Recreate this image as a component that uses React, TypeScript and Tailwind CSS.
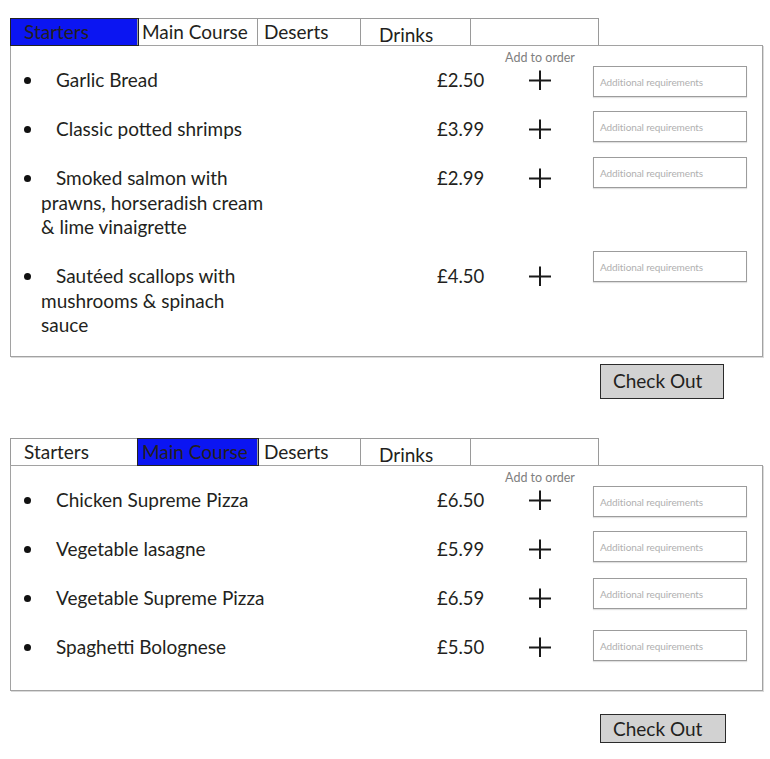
import React from 'react';

// Menu ordering wireframe — two copies of the tabbed menu panel,
// one with Starters active and one with Main Course active.

interface MenuItem {
  lines: string[];
  price: string;
  inputShift: string;
}

interface Tab {
  label: string;
  cls: string;
}

const TABS: Tab[] = [
  { label: 'Starters', cls: 'w-[127px] pl-[13px]' },
  { label: 'Main Course', cls: 'w-[120px] pl-[4px]' },
  { label: 'Deserts', cls: 'w-[103px] pl-[6px]' },
  { label: 'Drinks', cls: 'w-[110px] pl-[18px] pt-[3px]' },
  { label: '', cls: 'flex-1' },
];

const STARTERS: MenuItem[] = [
  { lines: ['Garlic Bread'], price: '£2.50', inputShift: '-mt-[2px]' },
  { lines: ['Classic potted shrimps'], price: '£3.99', inputShift: '-mt-[6px]' },
  {
    lines: ['Smoked salmon with', 'prawns, horseradish cream', '& lime vinaigrette'],
    price: '£2.99',
    inputShift: '-mt-[9px]',
  },
  {
    lines: ['Sautéed scallops with', 'mushrooms & spinach', 'sauce'],
    price: '£4.50',
    inputShift: '-mt-[13px]',
  },
];

const MAINS: MenuItem[] = [
  { lines: ['Chicken Supreme Pizza'], price: '£6.50', inputShift: '-mt-[2px]' },
  { lines: ['Vegetable lasagne'], price: '£5.99', inputShift: '-mt-[6px]' },
  { lines: ['Vegetable Supreme Pizza'], price: '£6.59', inputShift: '-mt-[8px]' },
  { lines: ['Spaghetti Bolognese'], price: '£5.50', inputShift: '-mt-[5px]' },
];

function Plus() {
  return (
    <svg width="24" height="24" viewBox="0 0 24 24" className="block">
      <path d="M1 12.5H23M12 2.5V22" stroke="#1a1a1a" strokeWidth="2" fill="none" />
    </svg>
  );
}

function Row({ item }: { item: MenuItem }) {
  return (
    <div className="flex items-start">
      <div className="w-[30px] shrink-0">
        <div className="ml-[13px] mt-[9px] w-[7px] h-[7px] rounded-full bg-[#111]" />
      </div>
      <div className="w-[396px] shrink-0 leading-[24.5px]">
        {item.lines.map((line, i) => (
          <div key={i} className={i === 0 ? 'pl-[15px] whitespace-nowrap' : 'whitespace-nowrap'}>
            {line}
          </div>
        ))}
      </div>
      <div className="w-[91px] shrink-0 leading-[24.5px] text-[18.5px]">{item.price}</div>
      <div className="w-[24px] h-[24px] shrink-0">
        <Plus />
      </div>
      {/* input hangs over the row line; its own height must not push the row */}
      <div className="ml-[41px] w-[154px] h-[24px] shrink-0">
        <div className={`w-[154px] h-[31px] border border-[#9c9c9c] shadow-[0_1px_1px_#e0e0e0] flex items-center pl-[6px] ${item.inputShift}`}>
          <span className="text-[10px] text-[#b0b0b0] leading-none tracking-[-0.1px]">Additional requirements</span>
        </div>
      </div>
    </div>
  );
}

function MenuPanel({ active, items, boxH }: { active: string; items: MenuItem[]; boxH: string }) {
  return (
    <div>
      <div className="flex w-[589px] h-[27px] border-t border-l border-r border-[#9a9a9a]">
        {TABS.map((t, i) => {
          const on = t.label === active;
          return (
            <div
              key={i}
              className={`${t.cls} h-[26px] leading-[26px] text-[19px] ${i < TABS.length - 1 ? 'border-r border-[#9a9a9a]' : ''} ${
                on ? 'relative z-10 bg-[#0b15f2] outline-1 outline-[#222]' : ''
              }`}
            >
              {t.label}
            </div>
          );
        })}
      </div>
      <div className={`w-[753px] ${boxH} border border-[#a2a2a2] shadow-[1px_1px_0_#dadada] pt-[5px] text-[19px]`}>
        <div className="pl-[489px] h-[14px]">
          <div className="w-[80px] text-center text-[12.5px] leading-[14px] text-[#808080]">Add to order</div>
        </div>
        <div className="mt-[3px] flex flex-col gap-[24.5px]">
          {items.map((it, i) => (
            <Row key={i} item={it} />
          ))}
        </div>
      </div>
    </div>
  );
}

function CheckOut({ size }: { size: string }) {
  return (
    <div className="pl-[590px]">
      <button className={`${size} bg-[#d2d2d2] border-[1.5px] border-[#2b2b2b] text-left pl-[12px] text-[19px] text-[#231f20]`}>
        Check Out
      </button>
    </div>
  );
}

export default function App() {
  return (
    <div
      className="w-[770px] h-[759px] bg-white pt-[18px] pl-[10px] text-[#231f20]"
      style={{ fontFamily: 'Lato, "Open Sans", sans-serif' }}
    >
      <MenuPanel active="Starters" items={STARTERS} boxH="h-[312px]" />
      <div className="mt-[7px]">
        <CheckOut size="w-[124px] h-[35px]" />
      </div>
      <div className="mt-[39px]">
        <MenuPanel active="Main Course" items={MAINS} boxH="h-[226px]" />
      </div>
      <div className="mt-[23px]">
        <CheckOut size="w-[126px] h-[29px]" />
      </div>
    </div>
  );
}
